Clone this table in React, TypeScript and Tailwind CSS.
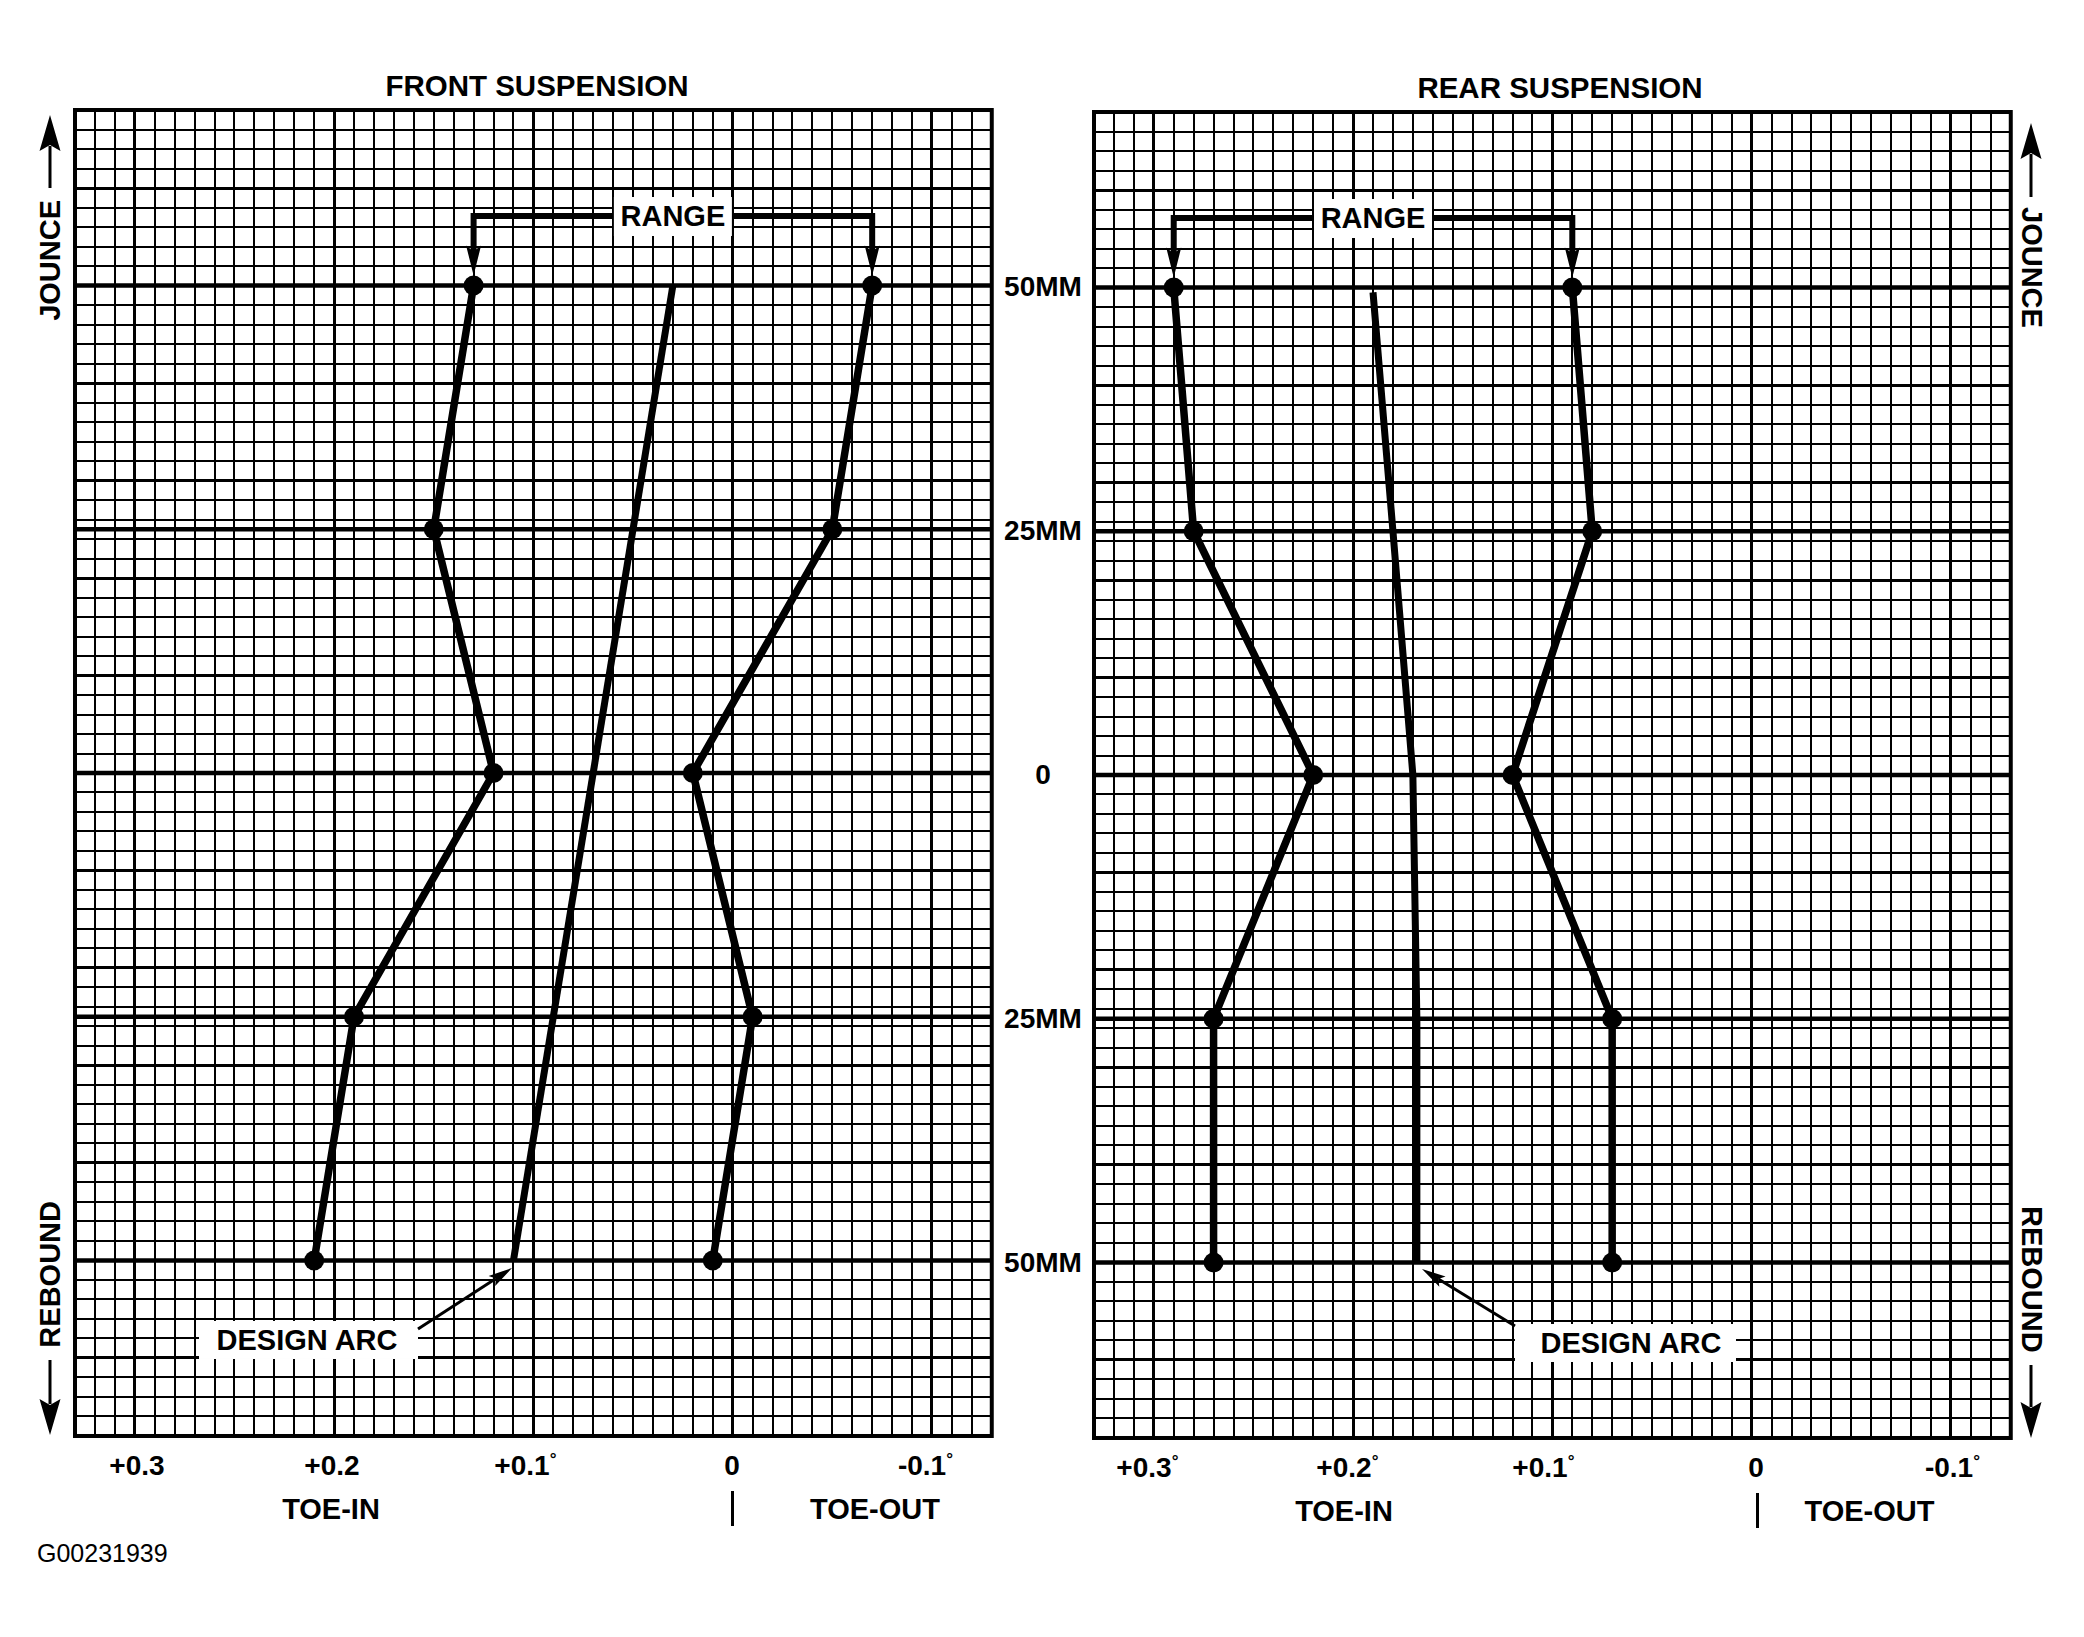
import React from "react";

const COL = 19.93;
const ROW = 19.5;
const NC = 46;
const NR = 68;
const W = NC * COL;
const H = NR * ROW;
const X0 = 33 * COL;
const Y0 = 34 * ROW;
const xT = (t: number) => X0 - t * COL * 100;
const yM = (mm: number) => Y0 - mm * 9.75;

type Pt = [number, number];

function head(x1: number, y1: number, x2: number, y2: number, len: number, wid: number) {
  const dx = x2 - x1;
  const dy = y2 - y1;
  const L = Math.hypot(dx, dy);
  const ux = dx / L;
  const uy = dy / L;
  const px = -uy;
  const py = ux;
  const bx = x2 - ux * len;
  const by = y2 - uy * len;
  const nx = x2 - ux * len * 0.8;
  const ny = y2 - uy * len * 0.8;
  return {
    d: `M${x2} ${y2}L${bx + (px * wid) / 2} ${by + (py * wid) / 2}L${nx} ${ny}L${bx - (px * wid) / 2} ${by - (py * wid) / 2}Z`,
    nx,
    ny,
  };
}

const pts = (a: Pt[]) => a.map(([t, mm]) => `${xT(t)},${yM(mm)}`).join(" ");

type Lbl = {
  tx: number;
  ty: number;
  box: [number, number, number, number];
  from: [number, number];
  to: [number, number];
};

function Chart({ left, right, design, lbl }: { left: Pt[]; right: Pt[]; design: Pt[]; lbl: Lbl }) {
  const cols = Array.from({ length: NC + 1 }, (_, i) => i);
  const rows = Array.from({ length: NR + 1 }, (_, j) => j);
  const refs = [9, 21.5, 34, 46.5, 59];
  const xl = xT(left[0][0]);
  const xr = xT(right[0][0]);
  const yb = 106;
  const tipY = yM(50) - 10;
  const hl = head(xl, yb, xl, tipY, 30, 15);
  const hr = head(xr, yb, xr, tipY, 30, 15);
  const rcx = xT(design[0][0]);
  const ah = head(lbl.from[0], lbl.from[1], lbl.to[0], lbl.to[1], 24, 12);
  const font = "Liberation Sans, Arial, sans-serif";
  return (
    <svg width={W} height={H} viewBox={`0 0 ${W} ${H}`} className="block overflow-visible">
      <g stroke="black" shapeRendering="crispEdges">
        {cols.map((i) => {
          const major = (i - 3) % 10 === 0;
          return (
            <line key={"c" + i} x1={i * COL} y1={0} x2={i * COL} y2={H} strokeWidth={major ? 3 : 2} />
          );
        })}
        {rows.map((j) => {
          const major = (j - 4) % 5 === 0;
          return (
            <line key={"r" + j} x1={0} y1={j * ROW} x2={W} y2={j * ROW} strokeWidth={major ? 3 : 2} />
          );
        })}
      </g>
      {refs.map((r) => (
        <line key={"f" + r} x1={0} y1={r * ROW} x2={W} y2={r * ROW} stroke="black" strokeWidth={4.5} />
      ))}
      <rect x={0} y={0} width={W} height={H} fill="none" stroke="black" strokeWidth={4} />

      {/* range bracket */}
      <path
        d={`M${xl} ${hl.ny}V${yb}H${xr}V${hr.ny}`}
        fill="none"
        stroke="black"
        strokeWidth={6}
        strokeLinejoin="miter"
      />
      <path d={hl.d} fill="black" />
      <path d={hr.d} fill="black" />
      <rect x={rcx - 59} y={87} width={118} height={39} fill="white" />
      <text
        x={rcx}
        y={yb}
        textAnchor="middle"
        dominantBaseline="central"
        fontFamily={font}
        fontWeight={700}
        fontSize={29}
        fill="black"
      >
        RANGE
      </text>

      {/* curves */}
      <polyline points={pts(design)} fill="none" stroke="black" strokeWidth={7} strokeLinejoin="round" />
      <polyline points={pts(left)} fill="none" stroke="black" strokeWidth={7.5} strokeLinejoin="round" />
      <polyline points={pts(right)} fill="none" stroke="black" strokeWidth={7.5} strokeLinejoin="round" />
      {left.concat(right).map(([t, mm], k) => (
        <circle key={"d" + k} cx={xT(t)} cy={yM(mm)} r={10} fill="black" />
      ))}

      {/* design arc label */}
      <rect
        x={lbl.box[0]}
        y={lbl.box[1]}
        width={lbl.box[2] - lbl.box[0]}
        height={lbl.box[3] - lbl.box[1]}
        fill="white"
      />
      <line x1={lbl.from[0]} y1={lbl.from[1]} x2={ah.nx} y2={ah.ny} stroke="black" strokeWidth={3} />
      <path d={ah.d} fill="black" />
      <text
        x={lbl.tx}
        y={lbl.ty}
        textAnchor="middle"
        dominantBaseline="central"
        fontFamily={font}
        fontWeight={700}
        fontSize={29}
        fill="black"
      >
        DESIGN ARC
      </text>
    </svg>
  );
}

function ArrowUp({ h }: { h: number }) {
  return (
    <svg width="24" height={h} viewBox={`0 0 24 ${h}`} className="block">
      <path d="M12 0L22.5 36L12 30L1.5 36Z" fill="black" />
      <line x1="12" y1="31" x2="12" y2={h} stroke="black" strokeWidth="3" />
    </svg>
  );
}

function ArrowDown({ h }: { h: number }) {
  return (
    <svg width="24" height={h} viewBox={`0 0 24 ${h}`} className="block">
      <path d={`M12 ${h}L22.5 ${h - 36}L12 ${h - 30}L1.5 ${h - 36}Z`} fill="black" />
      <line x1="12" y1="0" x2="12" y2={h - 31} stroke="black" strokeWidth="3" />
    </svg>
  );
}

function Deg({ v }: { v: string }) {
  return (
    <span className="relative">
      {v}
      <span className="absolute left-full top-[1px] text-[17px] leading-[17px]">°</span>
    </span>
  );
}

const frontLeft: Pt[] = [
  [0.13, 50],
  [0.15, 25],
  [0.12, 0],
  [0.19, -25],
  [0.21, -50],
];
const frontRight: Pt[] = [
  [-0.07, 50],
  [-0.05, 25],
  [0.02, 0],
  [-0.01, -25],
  [0.01, -50],
];
const frontDesign: Pt[] = [
  [0.03, 50],
  [0.11, -50],
];
const rearLeft: Pt[] = [
  [0.29, 50],
  [0.28, 25],
  [0.22, 0],
  [0.27, -25],
  [0.27, -50],
];
const rearRight: Pt[] = [
  [0.09, 50],
  [0.08, 25],
  [0.12, 0],
  [0.07, -25],
  [0.07, -50],
];
const rearDesign: Pt[] = [
  [0.19, 49.5],
  [0.18, 25],
  [0.17, 0],
  [0.168, -25],
  [0.168, -50],
];

const vText = "[writing-mode:vertical-rl] text-[29px] font-bold leading-[29px]";

export default function App() {
  return (
    <div className="w-[2084px] h-[1637px] bg-white text-black font-['Liberation_Sans',Arial,sans-serif] pt-[69px] overflow-hidden">
      <div className="flex items-start">
        {/* left side labels */}
        <div className="w-[75px] shrink-0 pt-[41px] pl-[25px]">
          <div className="h-[1326px] flex flex-col justify-between items-center">
            <div className="flex flex-col items-center mt-[5px]">
              <ArrowUp h={73} />
              <div className={`mt-[12px] rotate-180 ${vText}`}>JOUNCE</div>
            </div>
            <div className="flex flex-col items-center mb-[1px]">
              <div className={`mb-[12px] rotate-180 ${vText}`}>REBOUND</div>
              <ArrowDown h={75} />
            </div>
          </div>
        </div>

        {/* front */}
        <div className="w-[917px] shrink-0 flex flex-col">
          <div className="h-[34px] leading-[34px] text-[29.5px] font-bold text-center pl-[7px]">FRONT SUSPENSION</div>
          <div className="mt-[7px]">
            <Chart
              left={frontLeft}
              right={frontRight}
              design={frontDesign}
              lbl={{ tx: 232, ty: 1230, box: [124, 1211, 343, 1249], from: [343, 1219], to: [437, 1158] }}
            />
          </div>
          <div className="flex mt-[13px] h-[34px] leading-[34px] text-[28px] font-bold">
            <div className="w-[120px] shrink-0 text-center ml-[2px]">+0.3</div>
            <div className="w-[120px] shrink-0 text-center ml-[75px]">+0.2</div>
            <div className="w-[120px] shrink-0 text-center ml-[70px]">
              <Deg v="+0.1" />
            </div>
            <div className="w-[120px] shrink-0 text-center ml-[90px]">0</div>
            <div className="w-[120px] shrink-0 text-center ml-[70px]">
              <Deg v="-0.1" />
            </div>
          </div>
          <div className="flex mt-[9px] h-[34px] leading-[34px] text-[29px] font-bold">
            <div className="w-[200px] shrink-0 text-center ml-[156px]">TOE-IN</div>
            <div className="w-[3px] shrink-0 h-[35px] -mt-[1px] bg-black ml-[299.5px]" />
            <div className="w-[200px] shrink-0 text-center ml-[41.5px]">TOE-OUT</div>
          </div>
        </div>

        {/* middle labels */}
        <div className="w-[102px] shrink-0 flex flex-col items-center pt-[201px] gap-[210px] text-[28px] font-bold leading-[34px]">
          <div>50MM</div>
          <div>25MM</div>
          <div>0</div>
          <div>25MM</div>
          <div>50MM</div>
        </div>

        {/* rear */}
        <div className="w-[917px] shrink-0 flex flex-col mt-[2px]">
          <div className="h-[34px] leading-[34px] text-[29.5px] font-bold text-center pl-[15px]">REAR SUSPENSION</div>
          <div className="mt-[7px]">
            <Chart
              left={rearLeft}
              right={rearRight}
              design={rearDesign}
              lbl={{ tx: 537, ty: 1231, box: [421, 1212, 642, 1250], from: [421, 1214], to: [328, 1157] }}
            />
          </div>
          <div className="flex mt-[13px] h-[34px] leading-[34px] text-[28px] font-bold">
            <div className="w-[120px] shrink-0 text-center -ml-[10px]">
              <Deg v="+0.3" />
            </div>
            <div className="w-[120px] shrink-0 text-center ml-[80px]">
              <Deg v="+0.2" />
            </div>
            <div className="w-[120px] shrink-0 text-center ml-[76px]">
              <Deg v="+0.1" />
            </div>
            <div className="w-[120px] shrink-0 text-center ml-[96px]">0</div>
            <div className="w-[120px] shrink-0 text-center ml-[73px]">
              <Deg v="-0.1" />
            </div>
          </div>
          <div className="flex mt-[9px] h-[34px] leading-[34px] text-[29px] font-bold">
            <div className="w-[200px] shrink-0 text-center ml-[150px]">TOE-IN</div>
            <div className="w-[3px] shrink-0 h-[35px] -mt-[1px] bg-black ml-[311.5px]" />
            <div className="w-[200px] shrink-0 text-center ml-[11px]">TOE-OUT</div>
          </div>
        </div>

        {/* right side labels */}
        <div className="w-[40px] shrink-0 pt-[43px]">
          <div className="h-[1326px] flex flex-col justify-between items-center">
            <div className="flex flex-col items-center mt-[11px]">
              <ArrowUp h={74} />
              <div className={`mt-[10px] ${vText}`}>JOUNCE</div>
            </div>
            <div className="flex flex-col items-center">
              <div className={`mb-[12px] ${vText}`}>REBOUND</div>
              <ArrowDown h={73} />
            </div>
          </div>
        </div>
      </div>

      <div className="pl-[37px] mt-[10px] text-[25px] leading-[30px]">G00231939</div>
    </div>
  );
}
